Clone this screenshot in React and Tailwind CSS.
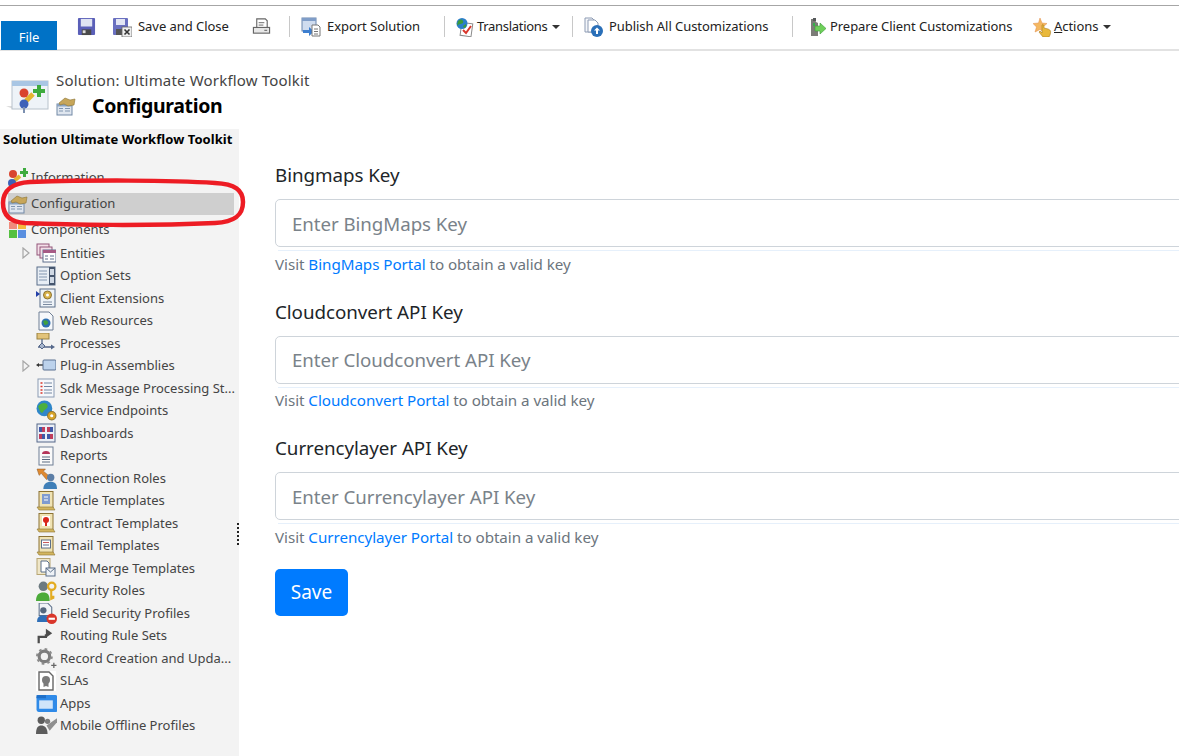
import React from 'react';

const Ico = ({ size = 20, className = '', children }) => (
    <svg width={size} height={size} viewBox="0 0 20 20" className={`shrink-0 ${className}`}>{children}</svg>
);

const Floppy = () => (
    <Ico size={19}>
        <rect x="1" y="1" width="18" height="18" rx="1" fill="#5a5fb8" />
        <rect x="4" y="2" width="12" height="8" fill="#dfe3f2" />
        <rect x="5" y="13" width="10" height="6" fill="#4a4a4a" />
        <rect x="6" y="14" width="3" height="3" fill="#ddd" />
    </Ico>
);
const SaveClose = () => (
    <Ico>
        <rect x="1" y="1" width="15" height="17" rx="1" fill="#6a70c0" />
        <rect x="4" y="2" width="9" height="6" fill="#e3e6f4" />
        <rect x="4" y="12" width="9" height="6" fill="#555" />
        <rect x="10" y="10" width="10" height="10" fill="#eee" stroke="#666" strokeWidth="0.8" />
        <path d="M12.5 12.5l5 5M17.5 12.5l-5 5" stroke="#333" strokeWidth="1.6" />
    </Ico>
);
const Printer = () => (
    <Ico size={19}>
        <path d="M5 2h9l2 2v7H5z" fill="#fff" stroke="#666" strokeWidth="1.2" />
        <path d="M7 6h6M7 8.5h5" stroke="#666" />
        <rect x="1.5" y="11" width="17" height="6" fill="#e8e8e8" stroke="#666" strokeWidth="1.2" />
        <path d="M13 14h3" stroke="#555" />
    </Ico>
);
const ExportIco = () => (
    <Ico>
        <rect x="1" y="1" width="14" height="13" fill="#cfdcef" stroke="#6a86ad" />
        <rect x="1" y="1" width="14" height="3" fill="#7f9dc8" />
        <path d="M2 13h6v-3l5 4.5-5 4.500v-3H2z" fill="#3d7fd0" />
        <path d="M11 8h6l2 2v9h-8z" fill="#fff" stroke="#777" />
        <path d="M13 12h4M13 14.500h4M13 17h4" stroke="#777" />
    </Ico>
);
const Translate = () => (
    <Ico>
        <rect x="6" y="6" width="11" height="13" fill="#fff" stroke="#8a8a8a" transform="rotate(8 11 12)" />
        <circle cx="7" cy="6.500" r="5.500" fill="#2c7fc9" />
        <path d="M3 4c2-2 4-2 5 0s-1 3-3 3-2 2-3 1zM8 9l3-2v3l-2 1z" fill="#3c9b3c" />
        <path d="M8 13l3 3 5-7" stroke="#d9362b" strokeWidth="2" fill="none" />
    </Ico>
);
const Publish = () => (
    <Ico>
        <path d="M1 1h7l3 3v11H1z" fill="#f4f6fa" stroke="#8d9bb3" />
        <path d="M4 3h7l3 3v9H4z" fill="#fff" stroke="#8d9bb3" />
        <circle cx="13" cy="14" r="6" fill="#2a6fb8" />
        <path d="M13 10.500l3 3h-2v3.500h-2v-3.500h-2z" fill="#fff" />
    </Ico>
);
const Prepare = () => (
    <Ico>
        <path d="M3 2h4l1 3 2 1v13H3z" fill="#7c7c78" />
        <rect x="5" y="1" width="3" height="3" fill="#55585a" />
        <rect x="5" y="6" width="2" height="3" fill="#35b04a" />
        <path d="M7 9h5V6l6 5.500-6 5.500v-3H7z" fill="#6fd05a" stroke="#3c9a3a" strokeWidth="0.6" />
    </Ico>
);
const ActionsIco = () => (
    <Ico>
        <path d="M7 1l2 5 5 .5-4 3.500 1 5-4-2.500-5 2.500 1.500-5L0 6.500 5.500 6z" fill="#f4b860" stroke="#e08a4a" strokeWidth="0.5" />
        <path d="M9 8c1-1 2 0 2 2l0 1 4 1c3 1 3 3 2 6l-1 2H10l-4-5 1-1 2 2z" fill="#e9b93c" stroke="#a87a20" strokeWidth="0.6" />
    </Ico>
);
const SolutionBig = () => (
    <svg width="44" height="36" viewBox="0 0 44 36" className="shrink-0">
        <path d="M0 27l7 3v-3z" fill="#ddd" />
        <rect x="6" y="2" width="36" height="28" fill="#eef3f8" stroke="#b8c2cc" />
        <rect x="6" y="2" width="36" height="5" fill="#a9c6e4" />
        <path d="M20 22l7-7" stroke="#e4b52f" strokeWidth="5" />
        <circle cx="18" cy="14" r="4.500" fill="#d9442f" />
        <circle cx="18" cy="25" r="4.500" fill="#3e62b8" />
        <path d="M27 10h4V6h4v4h4v4h-4v4h-4v-4h-4z" fill="#3eab3e" />
        <path d="M18 28v6" stroke="#7c90b0" strokeWidth="2" />
    </svg>
);
const ConfigIco = ({ size = 20 }) => (
    <Ico size={size}>
        <rect x="1" y="8" width="15" height="11" fill="#dfe6ef" stroke="#7289a6" />
        <rect x="1" y="8" width="15" height="2.500" fill="#8aa4c4" />
        <path d="M3 12.500h4M9 12.500h5M3 15h4M9 15h5" stroke="#8096b0" />
        <path d="M3 7l6-5 5 2 5-1-1 6-6 1-4-2-4 1z" fill="#c7a65a" stroke="#8c7334" strokeWidth="0.6" />
    </Ico>
);
const InfoIco = () => (
    <Ico>
        <path d="M6 13l6-5" stroke="#e4b52f" strokeWidth="4" />
        <circle cx="5" cy="6" r="4" fill="#d9442f" />
        <circle cx="4" cy="15" r="4" fill="#3e62b8" />
        <path d="M12 3h3V0h3v3h2v3h-2v3h-3V6h-3z" fill="#3eab3e" />
    </Ico>
);
const Components = () => (
    <Ico>
        <rect x="1" y="2" width="8" height="7" fill="#ef8c7c" />
        <rect x="10" y="2" width="8" height="7" fill="#f4b93c" />
        <rect x="1" y="10" width="8" height="8" fill="#55c040" />
        <rect x="10" y="10" width="8" height="8" fill="#5a8fe0" />
    </Ico>
);
const Entities = () => (
    <Ico>
        <rect x="1" y="1" width="12" height="11" fill="#f3dfe8" stroke="#93567a" />
        <rect x="4" y="4" width="12" height="11" fill="#f3dfe8" stroke="#93567a" />
        <rect x="7" y="7" width="13" height="12" fill="#fff" stroke="#5e6f8c" />
        <rect x="7" y="7" width="13" height="3" fill="#a65b86" />
        <path d="M9 13h3M14 13h4M9 16h3M14 16h4" stroke="#5e6f8c" />
    </Ico>
);
const OptionSets = () => (
    <Ico>
        <rect x="1" y="1" width="18" height="18" fill="#e8eef5" stroke="#5b6f8a" />
        <rect x="13" y="1" width="6" height="18" fill="#46566e" />
        <path d="M3 5h8M3 8h8M3 11h8M3 14h8" stroke="#8296b0" />
        <rect x="14" y="3" width="4" height="6" fill="#cfd8e4" />
        <rect x="14" y="11" width="4" height="6" fill="#cfd8e4" />
    </Ico>
);
const ClientExt = () => (
    <Ico>
        <rect x="4" y="1" width="15" height="18" fill="#eef3f8" stroke="#5b6f8a" />
        <path d="M0 3l4 3-4 3z" fill="#2440a8" />
        <circle cx="11.500" cy="7" r="4" fill="#d9b34a" stroke="#8c7334" />
        <circle cx="11.500" cy="7" r="1.500" fill="#fff" />
        <path d="M7 14h9M7 16.500h9" stroke="#7a8aa0" />
    </Ico>
);
const WebRes = () => (
    <Ico>
        <path d="M3 1h10l4 4v14H3z" fill="#f6f8fb" stroke="#6f7f95" />
        <circle cx="10" cy="12" r="4.500" fill="#2c6fb0" />
        <path d="M7 10c2-1 4-1 5 1s-2 3-3 3-1-2-2-4z" fill="#3fa03f" />
    </Ico>
);
const Processes = () => (
    <Ico>
        <rect x="1" y="0" width="12" height="6" fill="#e2c37a" stroke="#9a8240" />
        <path d="M6 6v5M2 14h13" stroke="#54678a" strokeWidth="1.3" />
        <path d="M6 10l3 3-3 3-3-3z" fill="#a7b5cc" stroke="#54678a" />
        <path d="M15 11.500l4 2.500-4 2.500z" fill="#54678a" />
    </Ico>
);
const PlugIn = () => (
    <Ico>
        <path d="M0 9l3-2v4z" fill="#333" />
        <path d="M3 9h4" stroke="#333" strokeWidth="1.4" />
        <rect x="7" y="4" width="13" height="10" rx="1" fill="#bcd2ec" stroke="#5a7191" />
    </Ico>
);
const SdkIco = () => (
    <Ico>
        <rect x="2" y="1" width="16" height="18" fill="#f6f8fb" stroke="#8b9cb4" />
        <path d="M4.500 5h2M4.500 8.500h2M4.500 12h2M4.500 15h2" stroke="#d9362b" strokeWidth="1.5" />
        <path d="M8 5h8M8 8.500h8M8 12h8M8 15h8" stroke="#7487a2" />
    </Ico>
);
const Endpoints = () => (
    <Ico size={21}>
        <circle cx="8" cy="8" r="7.500" fill="#2f86c9" />
        <path d="M2 6c3-4 8-4 9-1s-3 4-4 6-3 2-5-5z" fill="#4caf3f" />
        <circle cx="15" cy="15" r="4" fill="#d8a428" stroke="#8c7334" />
        <circle cx="15" cy="15" r="1.500" fill="#fff" />
    </Ico>
);
const Dashboards = () => (
    <Ico>
        <rect x="1" y="1" width="18" height="18" fill="#e9eef6" stroke="#56698a" />
        <rect x="3" y="4" width="3" height="5" fill="#3f58a8" />
        <rect x="6" y="4" width="3" height="5" fill="#c03d5c" />
        <rect x="11" y="4" width="3" height="5" fill="#c03d5c" />
        <rect x="14" y="4" width="3" height="5" fill="#3f58a8" />
        <rect x="3" y="11" width="3" height="5" fill="#c03d5c" />
        <rect x="6" y="11" width="3" height="5" fill="#3f58a8" />
        <rect x="11" y="11" width="3" height="5" fill="#3f58a8" />
        <rect x="14" y="11" width="3" height="5" fill="#c03d5c" />
    </Ico>
);
const Reports = () => (
    <Ico>
        <rect x="3" y="1" width="14" height="18" fill="#fafafa" stroke="#6f7f95" />
        <path d="M6 8a4 3 0 018 0z" fill="#b5355a" />
        <path d="M6 11h8M6 13.500h8M6 16h8" stroke="#5a6a80" />
    </Ico>
);
const ConnRoles = () => (
    <Ico size={21}>
        <path d="M1 1h8l-2 2 6 5-3 3-5-6-2 2z" fill="#e08a30" stroke="#8a5420" strokeWidth="0.5" />
        <circle cx="14" cy="9" r="3.500" fill="#5c7ea6" />
        <path d="M7 20c0-5 3-7 7-7s6 2 6 7z" fill="#3f7fb8" />
    </Ico>
);
const TemplateBase = ({ children }) => (
    <Ico>
        <rect x="3" y="0.500" width="14" height="16" fill="#f0e3b4" stroke="#8c7334" />
        <path d="M1 16h16l2 3H3z" fill="#d3b65e" stroke="#8c7334" strokeWidth="0.6" />
        {children}
    </Ico>
);
const ArticleT = () => (
    <TemplateBase>
        <rect x="6" y="3" width="8" height="10" fill="#7f9bd0" />
        <path d="M8 6h4M8 9h4" stroke="#fff" />
    </TemplateBase>
);
const ContractT = () => (
    <TemplateBase>
        <rect x="6" y="3" width="8" height="10" fill="#fff" />
        <circle cx="10" cy="7" r="3" fill="#d9261c" />
        <path d="M9 9h2v4H9z" fill="#d9261c" />
    </TemplateBase>
);
const EmailT = () => (
    <TemplateBase>
        <rect x="5.500" y="4" width="9" height="8" fill="#fff" stroke="#5b6f8a" />
        <path d="M7 6.500h6" stroke="#c85a5a" />
        <path d="M7 9h6" stroke="#5b6f8a" />
    </TemplateBase>
);
const MailMerge = () => (
    <Ico>
        <rect x="1" y="0.500" width="13" height="16" fill="#efe6c8" stroke="#b8a674" />
        <path d="M5 3h6l2 2v9H5z" fill="#fff" stroke="#5b6f8a" />
        <rect x="10" y="10" width="9" height="8" fill="#eef2f7" stroke="#5b6f8a" />
        <path d="M10 10l4.500 4 4.500-4" stroke="#5b6f8a" fill="none" />
    </Ico>
);
const SecRoles = () => (
    <Ico size={21}>
        <circle cx="7" cy="6" r="4.500" fill="#6c7a80" />
        <path d="M0 20c0-6 3-8 7-8s6 2 6 8z" fill="#4bab3a" />
        <circle cx="15" cy="6" r="3.500" fill="none" stroke="#e3ac22" strokeWidth="2.200" />
        <path d="M14.500 9v9l2-1v-2" stroke="#e3ac22" strokeWidth="2" fill="none" />
    </Ico>
);
const FieldSec = () => (
    <Ico size={21}>
        <path d="M3 0h8l4 4v8H3z" fill="#f0f3f7" stroke="#5b6f8a" />
        <circle cx="7" cy="7" r="3" fill="#55677e" />
        <path d="M1 18c0-5 3-6 6-6s5 1 5 6z" fill="#2f6fb8" />
        <circle cx="15" cy="15" r="5" fill="#d9362b" />
        <rect x="12" y="14" width="6" height="2" fill="#fff" />
    </Ico>
);
const Routing = () => (
    <Ico size={18}>
        <path d="M3 18v-7h8V8" stroke="#4d4d4d" strokeWidth="2.500" fill="none" />
        <path d="M11 2l7 5-7 5z" fill="#4d4d4d" />
    </Ico>
);
const RecordCreate = () => (
    <Ico size={21}>
        <circle cx="8" cy="8" r="5" fill="none" stroke="#7d7d7d" strokeWidth="3" />
        <circle cx="8" cy="8" r="7" fill="none" stroke="#8c8c8c" strokeWidth="2" strokeDasharray="2.500 3" />
        <path d="M17 14v5M14.500 16.500h5" stroke="#666" strokeWidth="1.2" />
    </Ico>
);
const Slas = () => (
    <span className="bg-white inline-flex shrink-0">
        <Ico>
            <path d="M3 1h10l4 4v14H3z" fill="#fff" stroke="#666" strokeWidth="1.4" />
            <circle cx="10" cy="9" r="4" fill="#7a7a7a" />
            <path d="M7.500 12v4l2.500-1 2.500 1v-4z" fill="#7a7a7a" />
        </Ico>
    </span>
);
const Apps = () => (
    <Ico size={21}>
        <rect x="0.500" y="2" width="20" height="16" rx="2" fill="#2f8ae8" />
        <rect x="0.500" y="2" width="9" height="3" fill="#1f6fc8" />
        <rect x="3" y="7" width="13" height="8" fill="#cfe4fa" />
    </Ico>
);
const MobileOff = () => (
    <Ico size={21}>
        <circle cx="5" cy="5" r="3.500" fill="#5c5c5c" />
        <path d="M0 18c0-6 2-8 5-8s6 2 6 8z" fill="#5c5c5c" />
        <circle cx="11" cy="6" r="2.500" fill="#7a7a7a" />
        <path d="M10 10l10-7 0 4-7 8z" fill="#8f8f8f" />
    </Ico>
);
const Expander = () => (
    <svg width="8" height="12" viewBox="0 0 8 12" className="block">
        <path d="M1 1l6 5-6 5z" fill="#f3f3f3" stroke="#a6a6a6" strokeWidth="1.200" />
    </svg>
);

const Caret = () => <span className="inline-block border-x-[4px] border-x-transparent border-t-[4px] border-t-[#333]" />;
const Sep = () => <span className="w-px h-[21px] bg-[#c8c8c8] shrink-0" />;

const tree = [
    { name: 'Entities', icon: Entities, expand: true },
    { name: 'Option Sets', icon: OptionSets },
    { name: 'Client Extensions', icon: ClientExt },
    { name: 'Web Resources', icon: WebRes },
    { name: 'Processes', icon: Processes },
    { name: 'Plug-in Assemblies', icon: PlugIn, expand: true },
    { name: 'Sdk Message Processing St...', icon: SdkIco },
    { name: 'Service Endpoints', icon: Endpoints },
    { name: 'Dashboards', icon: Dashboards },
    { name: 'Reports', icon: Reports },
    { name: 'Connection Roles', icon: ConnRoles },
    { name: 'Article Templates', icon: ArticleT },
    { name: 'Contract Templates', icon: ContractT },
    { name: 'Email Templates', icon: EmailT },
    { name: 'Mail Merge Templates', icon: MailMerge },
    { name: 'Security Roles', icon: SecRoles },
    { name: 'Field Security Profiles', icon: FieldSec },
    { name: 'Routing Rule Sets', icon: Routing },
    { name: 'Record Creation and Upda...', icon: RecordCreate },
    { name: 'SLAs', icon: Slas },
    { name: 'Apps', icon: Apps },
    { name: 'Mobile Offline Profiles', icon: MobileOff },
];

const fields = [
    { label: 'Bingmaps Key', placeholder: 'Enter BingMaps Key', link: 'BingMaps Portal' },
    { label: 'Cloudconvert API Key', placeholder: 'Enter Cloudconvert API Key', link: 'Cloudconvert Portal' },
    { label: 'Currencylayer API Key', placeholder: 'Enter Currencylayer API Key', link: 'Currencylayer Portal' },
];

export default function App() {
    return (
        <div className="relative w-[1179px] h-[756px] overflow-hidden bg-white font-['Noto_Sans',sans-serif] text-[#333]">
            <div className="h-[5px]" />
            {/* ribbon */}
            <div className="h-[46px] border-y border-t-[#a6a6a6] border-b-[#e2e2e2] border-b-2 flex items-start text-[13px] tracking-[-0.05px] text-[#222]">
                <div className="w-[56px] h-[29px] mt-[15px] ml-px bg-[#0072c6] text-white text-[13px] flex items-center justify-center pt-[4px]">File</div>
                <div className="flex items-center h-[21px] mt-[10px]">
                    <div className="ml-[20px]"><Floppy /></div>
                    <div className="ml-[16px] w-[118px] flex items-center gap-[6px]"><SaveClose /><span>Save and Close</span></div>
                    <div className="ml-[22px] w-[37px]"><Printer /></div>
                    <Sep />
                    <div className="ml-[11px] w-[143px] flex items-center gap-[6px]"><ExportIco /><span>Export Solution</span></div>
                    <Sep />
                    <div className="ml-[10px] w-[117px] flex items-center gap-[2px]">
                        <Translate /><span className="tracking-[-0.3px]">Translations</span><span className="ml-[3px] flex"><Caret /></span>
                    </div>
                    <Sep />
                    <div className="ml-[11px] w-[208px] flex items-center gap-[5px]"><Publish /><span>Publish All Customizations</span></div>
                    <Sep />
                    <div className="ml-[15px] w-[225px] flex items-center gap-[2px]"><Prepare /><span>Prepare Client Customizations</span></div>
                    <div className="flex items-center">
                        <ActionsIco />
                        <span className="ml-px"><span className="underline">A</span>ctions</span>
                        <span className="ml-[5px] flex"><Caret /></span>
                    </div>
                </div>
            </div>
            {/* title */}
            <div className="h-[78px] flex items-start">
                <div className="ml-[6px] mt-[28px]"><SolutionBig /></div>
                <div className="ml-[6px] mt-[19px]">
                    <div className="text-[15px] leading-[20px] text-[#444] tracking-[0.18px]">Solution: Ultimate Workflow Toolkit</div>
                    <div className="flex items-center mt-[3px]">
                        <ConfigIco />
                        <span className="ml-[16px] text-[19.500px] leading-[26px] font-bold text-black tracking-[-0.35px]">Configuration</span>
                    </div>
                </div>
            </div>
            <div className="flex h-[627px]">
                {/* side nav */}
                <div className="w-[239px] bg-[#f3f3f3] shrink-0 text-[13px] tracking-[0px] text-[#444]">
                    <div className="text-[13px] leading-[20px] font-bold text-black pl-[3px] tracking-[0.06px] whitespace-nowrap">Solution Ultimate Workflow Toolkit</div>
                    <div className="mt-[16px] h-[26px] flex items-center pl-[8px] gap-[3px]"><InfoIco /><span>Information</span></div>
                    <div className="h-[22px] my-[2px] ml-[8px] w-[226px] bg-[#cfcfcf] flex items-center gap-[3px]"><ConfigIco /><span>Configuration</span></div>
                    <div className="h-[26px] flex items-center pl-[8px] gap-[3px]"><Components /><span>Components</span></div>
                    <div className="mt-[-1px]">
                        {tree.map(({ name, icon: Icon, expand }) => (
                            <div key={name} className="h-[22.500px] flex items-center whitespace-nowrap">
                                <div className="w-[36px] shrink-0 pl-[22px]">
                                    {expand && <Expander />}
                                </div>
                                <div className="w-[24px] shrink-0 flex"><Icon /></div>
                                <span>{name}</span>
                            </div>
                        ))}
                    </div>
                </div>
                {/* form */}
                <div className="flex-1 pl-[36px] pt-[33px] min-w-0">
                    {fields.map((f) => (
                        <div key={f.label} className="mb-[25px] w-[1000px]">
                            <div className="text-[18.800px] leading-[26px] text-[#212529] tracking-[-0.05px]">{f.label}</div>
                            <input
                                placeholder={f.placeholder}
                                className="mt-[11px] block w-full h-[48px] px-[16px] rounded-[5px] border border-[#ced4da] text-[18.700px] bg-white outline-none placeholder:text-[#6c757d] placeholder:opacity-90 tracking-[-0.05px]"
                            />
                            <div className="ml-[3px] mt-[3px] h-px bg-[#e6f0fb]" />
                            <div className="mt-[2.500px] text-[15.200px] leading-[20px] text-[#6c757d] tracking-[-0.05px]">
                                Visit <a className="text-[#007bff]">{f.link}</a> to obtain a valid key
                            </div>
                        </div>
                    ))}
                    <button className="w-[73px] h-[47px] -mt-[3px] rounded-[5px] bg-[#007bff] text-white text-[19px]">Save</button>
                </div>
            </div>
            {/* splitter grip and hand drawn mark lie over the page */}
            <div className="absolute left-[237px] top-[523px] flex flex-col gap-[2px]">
                {[0, 1, 2, 3, 4, 5].map((i) => <span key={i} className="block w-[2px] h-[2px] bg-[#222]" />)}
            </div>
            <svg className="absolute left-0 top-[175px]" width="250" height="55" viewBox="0 0 250 55">
                <path d="M30 7C90 5 170 5 215 8c20 1 28 7 28 19 0 13-8 20-28 21-65 3-145 2-190 0C10 47 3 40 3 28 3 16 12 8 30 7z" fill="none" stroke="#ed1c24" strokeWidth="4.500" />
            </svg>
        </div>
    );
}
